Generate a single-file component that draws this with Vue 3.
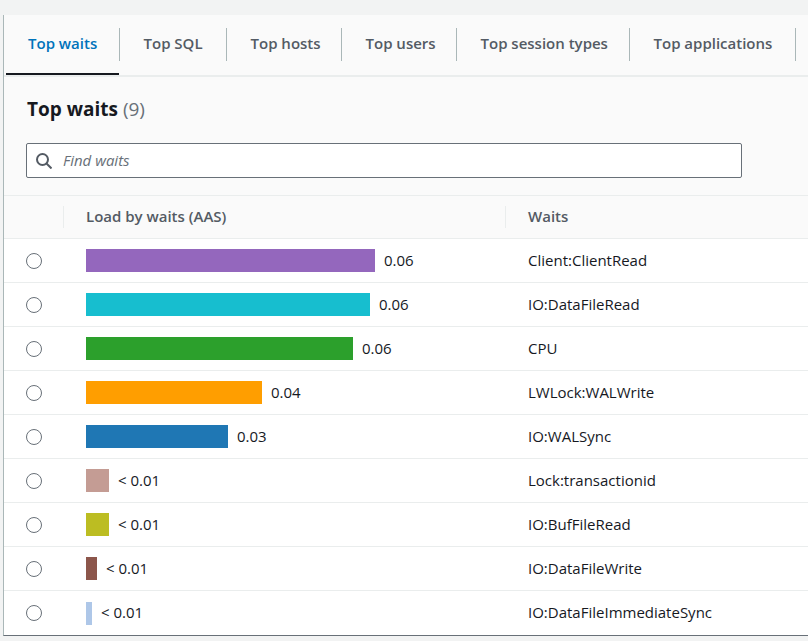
<template>
  <div class="page">
    <div class="card">
      <div class="tabs">
        <div
          v-for="(tab, i) in tabs"
          :key="tab.name"
          class="tab"
          :class="{ active: i === 0 }"
          :style="{ width: tab.width + 'px' }"
        >
          <span class="tab-label">{{ tab.name }}</span>
        </div>
      </div>
      <div class="head">
        <h2>Top waits <span class="count">(9)</span></h2>
        <div class="search">
          <svg width="16" height="16" viewBox="0 0 16 16" fill="none" stroke="#545b64" stroke-width="2">
            <circle cx="6.5" cy="6.5" r="5.5" />
            <path d="M10.5 10.5 15.5 15.5" />
          </svg>
          <span class="placeholder">Find waits</span>
        </div>
      </div>
      <div class="row header-row">
        <div class="col-radio"></div>
        <div class="col-load"><span class="th">Load by waits (AAS)</span></div>
        <div class="col-wait"><span class="th">Waits</span></div>
      </div>
      <div v-for="row in rows" :key="row.name" class="row">
        <div class="col-radio"><span class="radio"></span></div>
        <div class="col-load">
          <span class="bar" :style="{ width: row.width + 'px', background: row.color }"></span>
          <span class="val">{{ row.value }}</span>
        </div>
        <div class="col-wait">{{ row.name }}</div>
      </div>
    </div>
  </div>
</template>

<script setup>
const tabs = [
  { name: 'Top waits', width: 114 },
  { name: 'Top SQL', width: 107 },
  { name: 'Top hosts', width: 115 },
  { name: 'Top users', width: 115 },
  { name: 'Top session types', width: 173 },
  { name: 'Top applications', width: 166 }
]

const rows = [
  { name: 'Client:ClientRead', value: '0.06', width: 289, color: '#9467bd' },
  { name: 'IO:DataFileRead', value: '0.06', width: 284, color: '#17becf' },
  { name: 'CPU', value: '0.06', width: 267, color: '#2ca02c' },
  { name: 'LWLock:WALWrite', value: '0.04', width: 176, color: '#ff9e00' },
  { name: 'IO:WALSync', value: '0.03', width: 142, color: '#1f77b4' },
  { name: 'Lock:transactionid', value: '< 0.01', width: 23, color: '#c49c94' },
  { name: 'IO:BufFileRead', value: '< 0.01', width: 23, color: '#bcbd22' },
  { name: 'IO:DataFileWrite', value: '< 0.01', width: 11, color: '#8c564b' },
  { name: 'IO:DataFileImmediateSync', value: '< 0.01', width: 6, color: '#aec7e8' }
]
</script>

<style>
html,
body {
  margin: 0;
  background: #f2f3f3;
  overflow: hidden;
}
</style>

<style scoped>
.page {
  width: 808px;
  height: 641px;
  padding: 15px 0 0 3px;
  box-sizing: border-box;
  font-family: "Open Sans", "Liberation Sans", sans-serif;
  color: #16191f;
  overflow: hidden;
}
.card {
  width: 805px;
  box-sizing: border-box;
  background: #fff;
  border-left: 1px solid #aab7b8;
  border-bottom: 1px solid #687078;
}
.tabs {
  display: flex;
  height: 62px;
  box-sizing: border-box;
  background: #fafafa;
  border-bottom: 2px solid #eaeded;
  padding-left: 2px;
}
.tab {
  position: relative;
  flex: none;
  box-sizing: border-box;
  height: 60px;
  padding-top: 13px;
  font-size: 15px;
  line-height: 30px;
  font-weight: 600;
  color: #545b64;
}
.tab-label {
  display: block;
  height: 33px;
  padding-left: 23.5px;
  border-right: 1px solid #aab7b8;
  white-space: nowrap;
}
.tab.active .tab-label {
  padding-left: 22px;
}
.tab.active {
  color: #0073bb;
}
.tab.active::after {
  content: "";
  position: absolute;
  left: 0;
  right: 1px;
  bottom: 0;
  height: 2px;
  background: #16191f;
}
.head {
  height: 119px;
  box-sizing: border-box;
  background: #fafafa;
  padding: 19px 0 0 23px;
  border-bottom: 1px solid #eaeded;
}
h2 {
  margin: 0;
  font-size: 19px;
  line-height: 26px;
  font-weight: 700;
}
.count {
  font-weight: 400;
  color: #687078;
}
.search {
  display: flex;
  align-items: center;
  gap: 11px;
  margin-top: 21px;
  margin-left: -1px;
  width: 716px;
  height: 35px;
  box-sizing: border-box;
  padding-left: 9px;
  background: #fff;
  border: 1px solid #687078;
  border-radius: 2px;
}
.placeholder {
  font-size: 15px;
  font-style: italic;
  color: #687078;
  margin-bottom: 2px;
}
.row {
  display: flex;
  align-items: center;
  height: 44px;
  box-sizing: border-box;
  border-bottom: 1px solid #eaeded;
  font-size: 15px;
}
.row:last-child {
  border-bottom: none;
}
.row.header-row {
  height: 43px;
  background: #fafafa;
}
.th {
  font-weight: 600;
  color: #545b64;
}
.col-load .th,
.val {
  margin-bottom: 2px;
}
.col-radio {
  width: 60px;
  flex: none;
  padding-left: 22px;
  box-sizing: border-box;
  display: flex;
  align-items: center;
}
.col-load {
  width: 442px;
  flex: none;
  box-sizing: border-box;
  padding-left: 22px;
  display: flex;
  align-items: center;
  gap: 9px;
  height: 24px;
}
.col-wait {
  padding-left: 22px;
  color: #16191f;
  height: 24px;
  line-height: 22px;
}
.header-row .col-radio {
  height: 22px;
  border-right: 1px solid #eaeded;
}
.header-row .col-load {
  height: 22px;
  border-right: 1px solid #eaeded;
}
.radio {
  display: block;
  width: 16px;
  height: 16px;
  box-sizing: border-box;
  border: 1.5px solid #687078;
  border-radius: 50%;
  background: #fff;
}
.bar {
  display: block;
  height: 23px;
  flex: none;
}
</style>
